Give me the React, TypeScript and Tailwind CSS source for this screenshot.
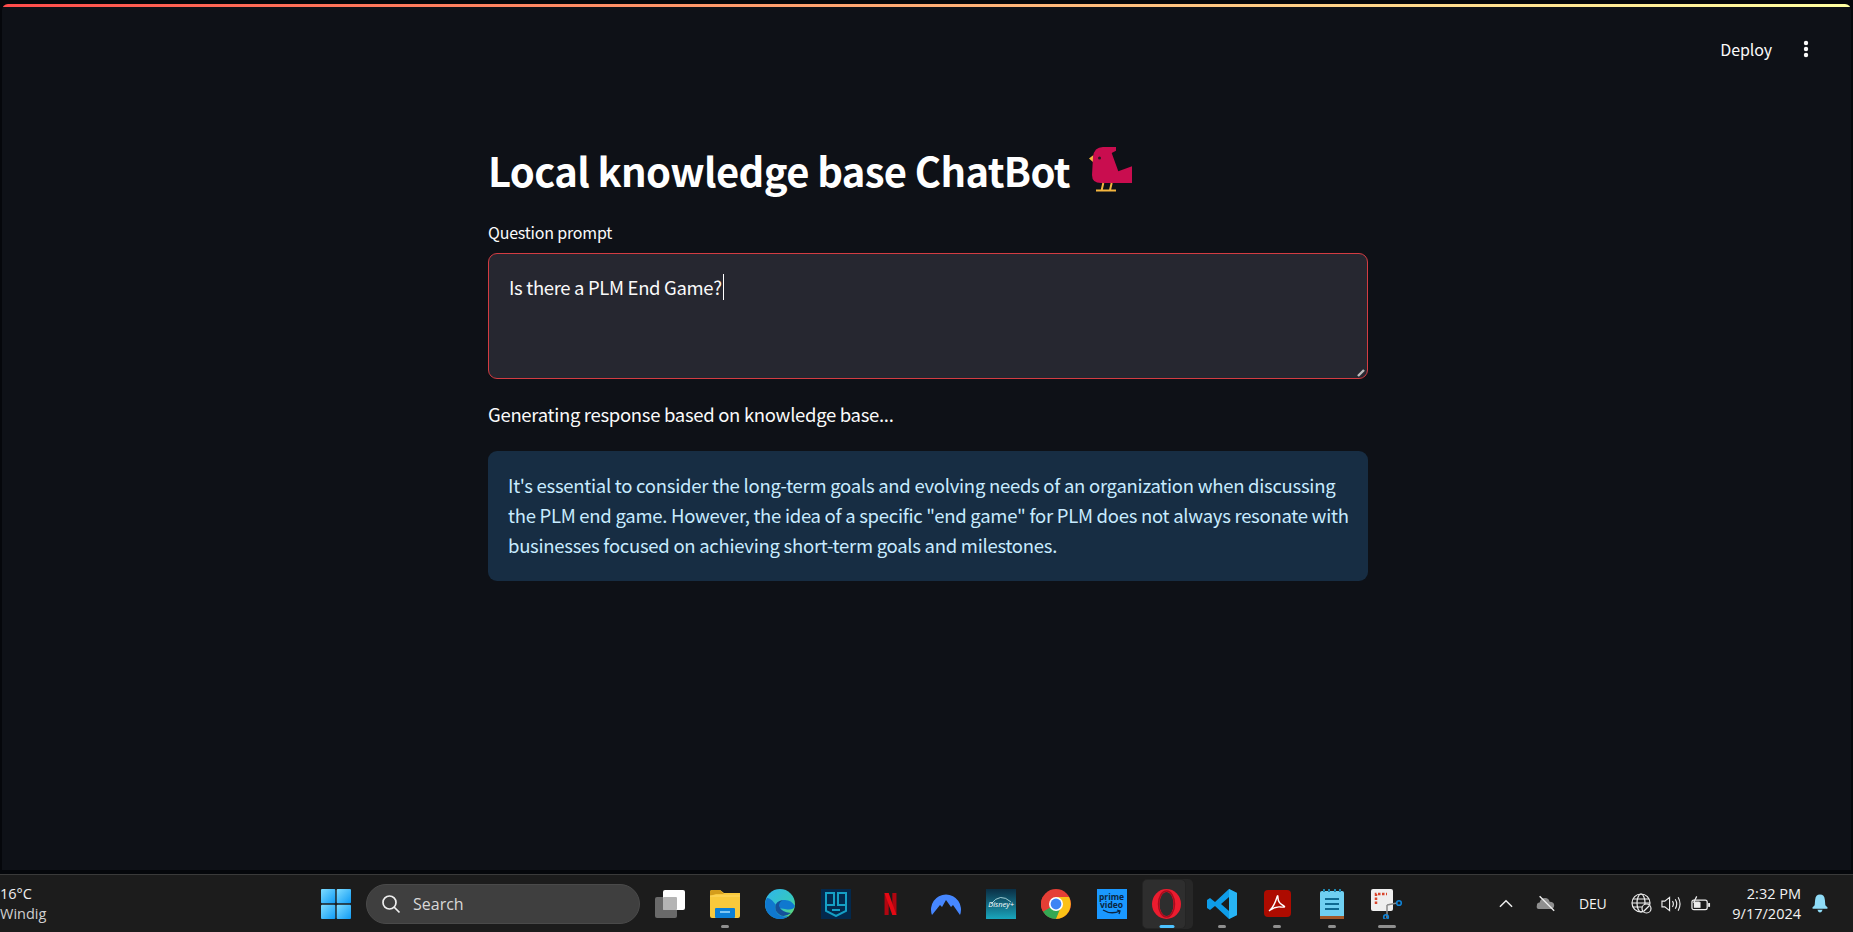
import React from "react";

const Bird = () => (
  <svg width="44" height="46" viewBox="0 0 44 46">
    <path d="M0 11.6 L4.5 8 L4.5 15.5 Z" fill="#f4b63f" />
    <path d="M4 10 Q5 0 14 0 H27 V3.7 L22.7 6 L29.3 24.3 L43 19.3 V36 H12 Q3 36 3 28 Z" fill="#c90d4f" />
    <circle cx="10.5" cy="11" r="1.5" fill="#2a1a1f" />
    <path d="M14.3 36 L12.7 43 M22.7 36 L21 43 M7 43.5 H27" stroke="#f4b63f" strokeWidth="2" fill="none" />
  </svg>
);

const Dot = ({ c = "bg-[#8f8f8f]", w = "w-[8px]" }: { c?: string; w?: string }) => (
  <span className={`absolute bottom-[1px] left-1/2 -translate-x-1/2 h-[3px] rounded-full ${c} ${w}`} />
);

const Slot = ({ children, dot, wide, active }: { children: React.ReactNode; dot?: boolean; wide?: boolean; active?: boolean }) => (
  <div className="relative w-[44px] h-[50px] flex items-center justify-center shrink-0">
    {active && <span className="absolute inset-y-0 left-[3px] right-[-4px] rounded-[5px] bg-[#272727]" />}
    {active && <span className="absolute inset-y-0 left-[-3px] right-[3px] rounded-[5px] bg-[#2e2e2e] border border-[#242424]" />}
    <span className="relative flex items-center justify-center">{children}</span>
    {dot && <Dot w={wide ? "w-[18px]" : "w-[8px]"} />}
    {active && <Dot c="bg-[#4cc2ff]" w="w-[15px]" />}
  </div>
);

export default function App() {
  return (
    <div className="h-[932px] w-[1853px] overflow-hidden flex flex-col bg-[#05070b] text-white" style={{ fontFamily: '"Noto Sans CJK SC", "Noto Sans", sans-serif' }}>
      <div className="h-[4px] shrink-0" />
      <div className="flex-1 min-h-0 flex flex-col ml-[2px] mr-[2px] rounded-t-[6px] overflow-hidden bg-[#0e1117]">
        <div className="h-[3px] shrink-0 bg-gradient-to-r from-[#ff4b4b] to-[#ffffa0]" />
        <header className="h-[60px] shrink-0 flex items-center justify-end pt-[24px] pr-[42px] gap-[31px]">
          <span className="text-[16px] tracking-[-0.1px] text-[#fafafa]">Deploy</span>
          <svg width="6" height="18" viewBox="0 0 6 18" fill="#fafafa"><circle cx="3" cy="3" r="2.2"/><circle cx="3" cy="9" r="2.2"/><circle cx="3" cy="15" r="2.2"/></svg>
        </header>
        <main className="flex-1 min-h-0">
          <div className="w-[880px] ml-[486px] pt-[77px]">
            <h1 className="flex items-center gap-[19px] text-[40px] leading-[52px] font-semibold tracking-[-0.65px]">
              <span>Local knowledge base ChatBot</span>
              <Bird />
            </h1>
            <label className="block mt-[24px] text-[16px] tracking-[-0.2px] leading-[24px] text-[#fafafa]">Question prompt</label>
            <div className="relative mt-[9px] h-[126px] rounded-[9px] border border-[#d33c42] bg-[#262730] px-[20px] pt-[18px] text-[18.5px] tracking-[-0.33px] leading-[30px] text-[#fafafa]">
              <span className="border-r border-white pr-[1px]">Is there a PLM End Game?</span>
              <svg className="absolute right-[2px] bottom-[1px]" width="8" height="8" viewBox="0 0 8 8" stroke="#bdbdbd" strokeWidth="2.4" fill="none"><path d="M1 7 L7 1" /></svg>
            </div>
            <p className="mt-[20px] text-[18.5px] tracking-[-0.31px] leading-[30px] text-[#fafafa]">Generating response based on knowledge base...</p>
            <div className="mt-[22px] rounded-[9px] bg-[#172d43] pl-[20px] pr-[18px] pt-[19px] pb-[21px] text-[18.5px] tracking-[-0.27px] leading-[30px] text-[#c7ebff]">
              It's essential to consider the long-term goals and evolving needs of an organization when discussing the PLM end game. However, the idea of a specific "end game" for PLM does not always resonate with businesses focused on achieving short-term goals and milestones.
            </div>
          </div>
        </main>
      </div>
      <div className="h-[4px] shrink-0" />
      <footer className="h-[58px] shrink-0 bg-[#1c1c1c] border-t border-[#3a3a3a] flex items-center" style={{ fontFamily: '"Open Sans", "Noto Sans", sans-serif' }}>
        <div className="w-[321px] shrink-0 text-[14.5px] leading-[20px] text-[#f0f0f0]">
          <div>16°C</div>
          <div className="text-[#d0d0d0]">Windig</div>
        </div>
        <svg width="30" height="30" viewBox="0 0 30 30" className="shrink-0">
          <defs><linearGradient id="w" x1="0" y1="0" x2="1" y2="1"><stop offset="0" stopColor="#7fdcff" /><stop offset="1" stopColor="#0f9bf5" /></linearGradient></defs>
          <rect x="0" y="0" width="14.3" height="14.3" rx="1" fill="url(#w)" /><rect x="15.7" y="0" width="14.3" height="14.3" rx="1" fill="url(#w)" />
          <rect x="0" y="15.7" width="14.3" height="14.3" rx="1" fill="url(#w)" /><rect x="15.7" y="15.7" width="14.3" height="14.3" rx="1" fill="url(#w)" />
        </svg>
        <div className="ml-[15px] w-[274px] h-[40px] shrink-0 rounded-full bg-[#3f3f3f] flex items-center pl-[14px] gap-[12px] text-[16px] text-[#d8d8d8] border border-[#4a4a4a]">
          <svg width="20" height="20" viewBox="0 0 20 20" fill="none" stroke="#eee" strokeWidth="1.7"><circle cx="8.5" cy="8.5" r="6.5"/><path d="M13 13 L18.5 18.5"/></svg>
          <span>Search</span>
        </div>
        <div className="ml-[8px] flex items-center gap-[11.2px]">
          <Slot>
            <svg width="30" height="28" viewBox="0 0 30 28"><rect x="0" y="7" width="22" height="21" rx="2" fill="#6a6a6a"/><rect x="8" y="0" width="22" height="20" rx="2" fill="#fff"/><rect x="8" y="7" width="14" height="13" rx="1" fill="#b4b4b4"/></svg>
          </Slot>
          <Slot dot>
            <svg width="30" height="28" viewBox="0 0 30 28"><path d="M0 2 Q0 0 2 0 H10 L14 3 H30 V26 Q30 28 28 28 H2 Q0 28 0 26 Z" fill="#f9c93c"/><path d="M0 2 Q0 0 2 0 H10 L14 4 H6 L0 6 Z" fill="#d59d1b"/><path d="M0 6 H30" stroke="#ffd966" strokeWidth="1"/><rect x="5" y="18" width="20" height="10" rx="1" fill="#0b7fd6"/><rect x="10" y="21" width="10" height="2" fill="#7cc6f4"/></svg>
          </Slot>
          <Slot>
            <svg width="30" height="30" viewBox="0 0 30 30"><defs><linearGradient id="e" x1="0" y1="0" x2="1" y2="1"><stop offset="0" stopColor="#2fb4ee"/><stop offset="0.6" stopColor="#35c7c0"/><stop offset="1" stopColor="#6fe05a"/></linearGradient></defs><circle cx="15" cy="15" r="15" fill="url(#e)"/><path d="M0 15 A15 15 0 0 0 24 27 Q14 29 11 22 Q8 13 18 11 Q26 10 30 17 Q28 22 20 20 L13 19 Q6 8 2 9 Q0 12 0 15 Z" fill="#0f78cf"/><path d="M11 22 Q8 13 18 11 Q14 13 14 17 Q16 23 26 24 Q17 31 11 22 Z" fill="#14509a"/></svg>
          </Slot>
          <Slot>
            <div className="w-[30px] h-[30px] bg-[#03294d] flex items-center justify-center">
              <svg width="24" height="26" viewBox="0 0 24 26" fill="none" stroke="#159fc5" strokeWidth="2"><path d="M2 2 H10 V14 H2 Z M14 2 H22 V14 H14 Z M2 14 V20 L12 25 L22 20 V14 M8 19 H16"/></svg>
            </div>
          </Slot>
          <Slot>
            <svg width="13" height="22" viewBox="0 0 13 24"><path d="M0 0 H4.5 V24 L0 24 Z" fill="#b00610"/><path d="M8.5 0 H13 V24 H8.5 Z" fill="#b00610"/><path d="M0 0 H4.5 L13 24 H8.5 Z" fill="#e50914"/></svg>
          </Slot>
          <Slot>
            <svg width="30" height="25" viewBox="0 0 30 25"><path d="M1 24 A15 15 0 1 1 29 24 L22 14 L20 16 L15 9 L11 16 L9 14 Z" fill="#4687ff"/></svg>
          </Slot>
          <Slot>
            <div className="relative w-[30px] h-[30px] flex items-center justify-center bg-gradient-to-b from-[#0a2f45] to-[#19a7bd] text-[7.5px] italic text-white">
              <svg className="absolute top-[6px] left-[4px]" width="22" height="10" viewBox="0 0 22 10" fill="none" stroke="#dff" strokeWidth="0.7"><path d="M1 9 Q10 -3 21 7"/></svg>
              <span className="mt-[3px]">Disney+</span>
            </div>
          </Slot>
          <Slot>
            <svg width="30" height="30" viewBox="0 0 30 30"><circle cx="15" cy="15" r="15" fill="#e53e35"/><path d="M15 15 L2 22.5 A15 15 0 0 0 15 30 L22.5 15 Z" fill="#34a853"/><path d="M15 8 H28 A15 15 0 0 1 15 30 L21 15 Z" fill="#fbc116"/><path d="M15 15 L2 22.5 A15 15 0 0 1 2 7.5 L9 19 Z" fill="#e53e35"/><circle cx="15" cy="15" r="7" fill="#fff"/><circle cx="15" cy="15" r="5.4" fill="#3f85f4"/></svg>
          </Slot>
          <Slot>
            <div className="w-[30px] h-[30px] bg-[#1a98ff] flex flex-col items-center justify-center text-[#0a2540] text-[8.5px] leading-[8px] font-bold">
              <span>prime</span><span>video</span>
              <svg width="20" height="6" viewBox="0 0 20 6" fill="none" stroke="#0a2540" strokeWidth="1.3"><path d="M1 1 Q9 6 18 2 M15 1 L18 2 L17 5"/></svg>
            </div>
          </Slot>
          <Slot active>
            <svg width="29" height="30" viewBox="0 0 29 30"><ellipse cx="14.5" cy="15" rx="14.5" ry="15" fill="#ec1c2f"/><ellipse cx="14.5" cy="15" rx="7" ry="12" fill="#2e2e2e"/><ellipse cx="14.5" cy="15" rx="8" ry="13" fill="none" stroke="#a90b1c" strokeWidth="1.5"/></svg>
          </Slot>
          <Slot dot>
            <svg width="30" height="30" viewBox="0 0 30 30"><path d="M22 0 L30 4 V26 L22 30 L8 17 L3 21 L0 19 V11 L3 9 L8 13 Z M22 8 L14 15 L22 22 Z" fill="#0e9ce8" fillRule="evenodd"/><path d="M22 0 L30 4 V26 L22 30 Z" fill="#27b4f5"/></svg>
          </Slot>
          <Slot dot>
            <div className="w-[27px] h-[27px] rounded-[4px] bg-[#ad0b00] flex items-center justify-center">
              <svg width="19" height="19" viewBox="0 0 19 19" fill="none" stroke="#fff" strokeWidth="1.4"><path d="M1 17 Q6 13 9 3 Q10 0 10 4 Q10 9 16 12 Q18 13.5 13 13 Q7 12 1 17 Z"/></svg>
            </div>
          </Slot>
          <Slot dot>
            <svg width="24" height="30" viewBox="0 0 24 30"><rect x="0" y="2" width="24" height="28" rx="2" fill="#6fd0f2"/><rect x="0" y="27" width="24" height="3" fill="#a2592a"/><path d="M5 10 H19 M5 15 H19 M5 20 H19" stroke="#0f6a91" strokeWidth="2"/><path d="M4 0 V3 M9 0 V3 M15 0 V3 M20 0 V3" stroke="#1f85ad" strokeWidth="2"/></svg>
          </Slot>
          <Slot dot wide>
            <svg width="32" height="30" viewBox="0 0 32 30"><rect x="0" y="0" width="22" height="22" rx="2" fill="#efefef"/><path d="M5 15 V5 H16" stroke="#d9452c" strokeWidth="2.5" strokeDasharray="2.5 1.5" fill="none"/><path d="M16 16 L16 29 M16 16 L26 14" stroke="#8a8a8a" strokeWidth="1.5"/><circle cx="15" cy="28" r="2.3" fill="none" stroke="#1083d6" strokeWidth="1.6"/><circle cx="28" cy="14" r="2.3" fill="none" stroke="#1083d6" strokeWidth="1.6"/></svg>
          </Slot>
        </div>
        <div className="ml-auto flex items-center text-[#f2f2f2]">
          <svg className="mr-[23px]" width="14" height="9" viewBox="0 0 15 9" fill="none" stroke="#eee" strokeWidth="1.6"><path d="M1 8 L7.5 1.5 L14 8"/></svg>
          <svg className="mr-[23px]" width="20" height="17" viewBox="0 0 22 18"><path d="M3 15 Q0 15 1 11 Q1 8 4 8 Q5 3 10 3 Q14 3 15 7 Q20 7 20 11 Q20 15 16 15 Z" fill="#8f8f8f"/><path d="M4 1 L20 17" stroke="#eee" strokeWidth="1.5"/></svg>
          <span className="mr-[24px] w-[28px] text-[14px] tracking-[-0.2px]">DEU</span>
          <svg className="mr-[9px]" width="21" height="21" viewBox="0 0 21 21" fill="none" stroke="#eee" strokeWidth="1.2"><circle cx="10" cy="10" r="9"/><ellipse cx="10" cy="10" rx="4" ry="9"/><path d="M1 10 H19 M2 6 H18 M2 14 H11"/><circle cx="15.5" cy="15.5" r="4.5" fill="#1c1c1c"/><path d="M12.5 18.5 L18.5 12.5"/></svg>
          <svg className="mr-[10px]" width="20" height="18" viewBox="0 0 21 18" fill="none" stroke="#eee" strokeWidth="1.2"><path d="M1 6 H4 L9 2 V16 L4 12 H1 Z M12 6 Q14 9 12 12 M15 4 Q18 9 15 14 M18 2 Q22 9 18 16"/></svg>
          <svg className="mr-[21px]" width="20" height="18" viewBox="0 0 21 18" fill="none" stroke="#eee" strokeWidth="1.3"><rect x="1" y="5" width="16" height="10" rx="2"/><path d="M19 8 V12" strokeWidth="2"/><rect x="3" y="7" width="7" height="6" fill="#eee" stroke="none"/><path d="M6 1 L3 7 H8 L5 12" /></svg>
          <div className="mr-[11px] w-[69px] text-right text-[14.5px] leading-[20px] whitespace-nowrap">
            <div>2:32 PM</div>
            <div>9/17/2024</div>
          </div>
          <svg className="mr-[25px]" width="16" height="19" viewBox="0 0 18 20"><path d="M9 0 Q4 0 3.5 6 L3 12 L0.5 14.5 Q0 16 1.5 16 H16.5 Q18 16 17.5 14.5 L15 12 L14.5 6 Q14 0 9 0 Z M6 17 H12 Q11 20 9 20 Q7 20 6 17 Z" fill="#8fdcf7"/></svg>
        </div>
      </footer>
    </div>
  );
}
